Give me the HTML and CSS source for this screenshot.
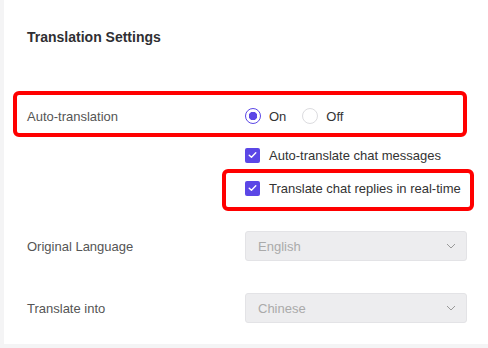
FILE: index.html
```html
<!DOCTYPE html>
<html lang="en">
<head>
    <meta charset="UTF-8">
    <meta name="viewport" content="width=device-width, initial-scale=1.0">
    <title>Translation Settings</title>
    <link rel="stylesheet" href="styles.css">
</head>
<body>
    <div class="card">
        <h3 class="card-title">Translation Settings</h3>

        <div class="setting-row highlight">
            <span class="label">Auto-translation</span>
            <div class="radio-group">
                <label class="radio checked"><span class="dot"></span>On</label>
                <label class="radio"><span class="dot"></span>Off</label>
            </div>
        </div>

        <div class="check-list">
            <label class="check"><span class="box"><svg viewBox="0 0 16 16" width="16" height="16"><path d="M4.5 8.2l2.4 2.3 4.6-4.8" fill="none" stroke="#fff" stroke-width="1.5" stroke-linecap="round" stroke-linejoin="round"/></svg></span>Auto-translate chat messages</label>
            <label class="check highlight-check"><span class="box"><svg viewBox="0 0 16 16" width="16" height="16"><path d="M4.5 8.2l2.4 2.3 4.6-4.8" fill="none" stroke="#fff" stroke-width="1.5" stroke-linecap="round" stroke-linejoin="round"/></svg></span>Translate chat replies in real-time</label>
        </div>

        <div class="select-row first">
            <span class="label">Original Language</span>
            <div class="select">
                <span>English</span>
                <svg viewBox="0 0 10 6" width="10" height="6"><path d="M1 1l4 4 4-4" fill="none" stroke="#999" stroke-width="1"/></svg>
            </div>
        </div>

        <div class="select-row">
            <span class="label">Translate into</span>
            <div class="select">
                <span>Chinese</span>
                <svg viewBox="0 0 10 6" width="10" height="6"><path d="M1 1l4 4 4-4" fill="none" stroke="#999" stroke-width="1"/></svg>
            </div>
        </div>
    </div>
</body>
</html>
```

FILE: styles.css
```css
body {
    font-family: "Liberation Sans", Arial, sans-serif;
    margin: 0;
    padding: 0;
    background-color: #f4f4f5;
    height: 348px;
    overflow: hidden;
}

.card {
    margin-left: 4px;
    height: 344px;
    box-sizing: border-box;
    background: #fff;
    padding: 0 21px 0 23px;
}

.card-title {
    margin: 0;
    padding-top: 28px;
    line-height: 18px;
    font-size: 14px;
    font-weight: 600;
    color: #2f2f33;
}

.label {
    font-size: 13px;
    color: #555;
}

.setting-row {
    display: flex;
    align-items: center;
    height: 46px;
    box-sizing: border-box;
    margin-top: 45px;
}

.setting-row .label {
    width: 218px;
}

.highlight {
    margin-left: -14px;
    padding-left: 10px;
    padding-top: 4px;
    border: 4px solid #ff0000;
    border-radius: 6px;
}

.radio-group {
    display: flex;
    gap: 16px;
}

.radio {
    display: flex;
    align-items: center;
    gap: 8px;
    font-size: 13px;
    color: #333;
}

.radio .dot {
    width: 16px;
    height: 16px;
    box-sizing: border-box;
    border: 1px solid #dcdcdf;
    border-radius: 50%;
    background: #fff;
}

.radio.checked .dot {
    border-color: #5b47e6;
    background: radial-gradient(circle, #5b47e6 0 4px, #fff 4.5px);
}

.check-list {
    display: flex;
    flex-direction: column;
    margin-left: 195px;
    margin-top: 9px;
}

.check {
    display: flex;
    align-items: center;
    gap: 9px;
    height: 18px;
    padding-left: 23px;
    font-size: 13px;
    color: #333;
    white-space: nowrap;
}

.check .box {
    width: 15px;
    height: 15px;
    border-radius: 2px;
    background: #5b47e6;
    display: flex;
    align-items: center;
    justify-content: center;
}

.highlight-check {
    margin-top: 5px;
    margin-right: -7px;
    height: 42px;
    box-sizing: border-box;
    padding-left: 19px;
    padding-bottom: 4px;
    border: 4px solid #ff0000;
    border-radius: 6px;
}

.select-row {
    display: grid;
    grid-template-columns: 218px 222px;
    align-items: center;
    margin-top: 32px;
}

.select-row.first {
    margin-top: 20px;
}

.select {
    display: flex;
    align-items: center;
    justify-content: space-between;
    height: 30px;
    box-sizing: border-box;
    padding: 0 10px 0 12px;
    background: #ededef;
    border: 1px solid #e3e3e6;
    border-radius: 3px;
    font-size: 13px;
    color: #aaa;
}
```
